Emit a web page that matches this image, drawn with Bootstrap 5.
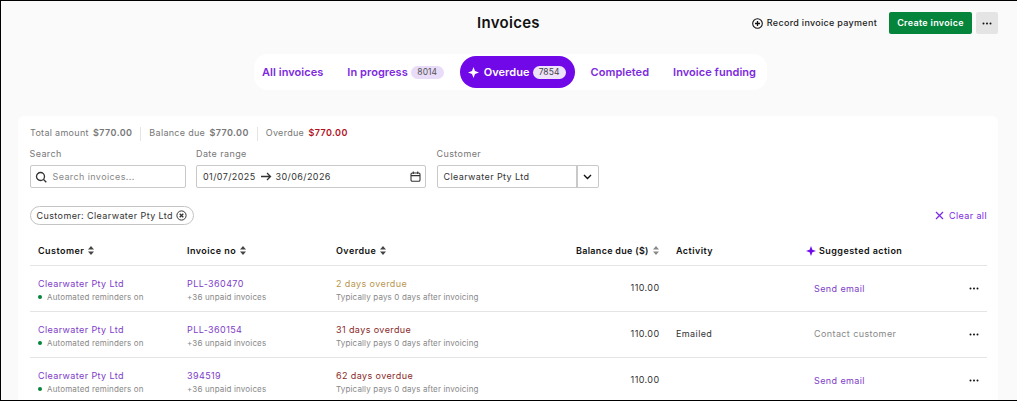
<!DOCTYPE html>
<html lang="en"><head><meta charset="utf-8"><title>Invoices</title>
<link href="https://cdn.jsdelivr.net/npm/bootstrap@5.3.0/dist/css/bootstrap.min.css" rel="stylesheet">
<style>
html,body{height:100%;overflow:hidden}
body{font-family:Inter,"Liberation Sans",sans-serif;background:#fafafa;color:#333;font-size:9px;letter-spacing:.4px}
.frame{height:401px;border-style:solid;border-color:#000;border-width:1.5px 0 1.5px 1.5px;overflow:hidden}
.top-bar{height:44px;padding:0 19px 0 0;position:relative}
.page-title{font-size:15px;font-weight:600;color:#111;margin:0;position:absolute;left:476px;top:13px;letter-spacing:.3px}
.rec-link{font-size:9px;font-weight:500;color:#222;text-decoration:none;letter-spacing:.3px;margin-right:8px}
.btn-create{background:#05843c;color:#fff;font-size:9px;font-weight:600;height:22px;width:83px;padding:0;border:0;border-radius:2px;letter-spacing:.3px}
.btn-more{background:#e4e4e4;width:22px;height:22px;padding:0;border:0;border-radius:2px;color:#111}
.tabs-wrap{height:36px;margin:9px 0 0 253px;width:513px;background:#fff;border-radius:14px}
.tab-item{font-size:11px;font-weight:600;color:#7d2ae0;text-decoration:none;letter-spacing:.05px;white-space:nowrap;display:flex;align-items:center;gap:4px}
.tab-active{background:#7008e8;color:#fff;border-radius:16px;height:32px;padding:0 9px 0 8px;margin-left:16px}
.tab-active svg{margin-right:1px}
.tabp1{margin-left:24px}.tabp2{margin-left:16px}.tabp3{margin-left:24px}
.cnt{font-size:8.5px;font-weight:400;border-radius:7px;height:13px;display:inline-flex;align-items:center;justify-content:center;width:33px;margin-left:-1px;background:#e9dcf8;color:#555}
.tab-active .cnt{background:#efe3fb;color:#444}
.panel{background:#fff;border-radius:6px 6px 0 0;margin:26px 19px 0 16.5px;padding:0 11px 0 12px;height:290px}
.summary{padding:11px 0 0 .5px;height:32px;line-height:12px;color:#777;letter-spacing:.3px}
.summary b{font-weight:600;color:#777;margin-left:1.5px;letter-spacing:.4px}
.summary b.due{color:#b2111c}
.sep{border-left:1px solid #e4e4e4;height:14px;margin:0 8px;display:inline-block;vertical-align:middle}
.f-label{color:#777;line-height:12px;margin-bottom:5px;display:block;font-size:9px}
.fbox{border:1px solid #c9c9c9;border-radius:2px;height:23px;display:flex;align-items:center;color:#333;background:#fff}
.fields{gap:10.5px;height:48px}
.f1{width:156px}.f2{width:230px}.f3{width:162px}
.ph-text{margin-left:2px}
.date-val{margin-left:2px}
.cust-val{padding-left:6px}
.cust-caret{width:22px;height:100%;border-left:2px solid #c9c9c9}
.chips-row{margin-top:10px;height:19px;margin-bottom:9px}
.chip{border:1px solid #c4c4c4;border-radius:10px;height:19px;padding:0 6px;display:inline-flex;align-items:center;gap:3px;color:#333}
.clear{color:#7d2ae0;text-decoration:none;display:flex;align-items:center;gap:5px}
.inv{table-layout:fixed;width:957px;margin:0;font-size:9px}
.inv th,.inv td{padding:0 8px 0 8.5px;border-bottom:1px solid #e4e4e4;background:transparent;vertical-align:middle;color:#333}
.inv th{height:31px;padding-top:3px;font-weight:600;color:#111;letter-spacing:.45px}
.inv th.num-h{padding-right:13px;letter-spacing:.3px}
.inv td{height:46px;line-height:14px}
.inv td.two-line{padding-top:4px}
.inv td.act-cell{padding-top:2px}
.c1,.c2{width:149px}.c3{width:240px}.c4{width:100px}.c5{width:130px}.c6{width:150px}
.lnk{color:#7d3cc8;text-decoration:none}
.sub{color:#888;font-size:8px;letter-spacing:.15px;line-height:12px;display:block}
.dot{display:inline-block;width:4px;height:4px;border-radius:50%;background:#05843c;margin-right:5px;vertical-align:1px}
.amber{color:#b8964f}.maroon{color:#8a2a2a}
.sort{margin-left:4px;vertical-align:-1px}
.spark{vertical-align:-2px;margin-left:-.5px;margin-right:3.5px}
.muted-act{color:#888}
.act{margin-left:8px;display:inline-block}
</style></head><body>
<div class="frame">
<div class="top-bar d-flex justify-content-end align-items-center gap-1">
 <h1 class="page-title">Invoices</h1>
 <a class="rec-link d-flex align-items-center gap-1" href="#"><svg width="11" height="11" viewBox="0 0 11 11" fill="none" stroke="#111" stroke-width="1.1"><circle cx="5.5" cy="5.5" r="4.8"/><path d="M5.5 3v5M3 5.5h5" stroke-width="1.3"/></svg>Record invoice payment</a>
 <button class="btn btn-create" type="button">Create invoice</button>
 <button class="btn btn-more d-flex align-items-center justify-content-center" type="button"><svg width="10" height="3" viewBox="0 0 10 3" fill="#111"><circle cx="1.5" cy="1.5" r="1"/><circle cx="5" cy="1.5" r="1"/><circle cx="8.5" cy="1.5" r="1"/></svg></button>
</div>
<nav class="tabs-wrap d-flex align-items-center">
 <a class="tab-item ms-2" href="#">All invoices</a>
 <a class="tab-item tabp1" href="#">In progress <span class="cnt">8014</span></a>
 <a class="tab-item tab-active" href="#"><svg width="11" height="11" viewBox="0 0 11 11" fill="#fff"><path d="M5.5 0L7 4l4 1.5L7 7l-1.5 4L4 7 0 5.5 4 4z"/></svg>Overdue <span class="cnt">7854</span></a>
 <a class="tab-item tabp2" href="#">Completed</a>
 <a class="tab-item tabp3" href="#">Invoice funding</a>
</nav>
<section class="panel">
 <div class="summary">Total amount <b>$770.00</b><span class="sep"></span>Balance due <b>$770.00</b><span class="sep"></span>Overdue <b class="due">$770.00</b></div>
 <div class="d-flex fields">
  <div class="f1"><label class="f-label">Search</label><div class="fbox"><svg class="mx-1" width="12" height="12" viewBox="0 0 12 12" fill="none" stroke="#333" stroke-width="1.3"><circle cx="5.5" cy="5.5" r="4"/><path d="M8.5 8.5l2.8 2.8"/></svg><span class="ph-text muted-act">Search invoices...</span></div></div>
  <div class="f2"><label class="f-label">Date range</label><div class="fbox px-1 justify-content-between"><span class="d-flex align-items-center date-val">01/07/2025<svg class="mx-1" width="12" height="9" viewBox="0 0 12 9" fill="none" stroke="#333" stroke-width="1.3"><path d="M1 4.5h9.5M7 1l3.5 3.5L7 8"/></svg>30/06/2026</span><svg width="11" height="11" viewBox="0 0 11 11" fill="none" stroke="#333" stroke-width="1.1"><rect x="1" y="2" width="9" height="8.3" rx="1.3"/><path d="M1 4.6h9M3.3.5v2.4M7.7.5v2.4"/></svg></div></div>
  <div class="f3"><label class="f-label">Customer</label><div class="fbox"><span class="flex-grow-1 cust-val">Clearwater Pty Ltd</span><span class="cust-caret d-flex align-items-center justify-content-center"><svg width="9" height="6" viewBox="0 0 9 6" fill="none" stroke="#111" stroke-width="1.4"><path d="M1 1l3.5 3.5L8 1"/></svg></span></div></div>
 </div>
 <div class="d-flex justify-content-between align-items-center chips-row">
  <span class="chip">Customer: Clearwater Pty Ltd <svg width="11" height="11" viewBox="0 0 11 11" fill="none" stroke="#333" stroke-width="1"><circle cx="5.5" cy="5.5" r="4.6"/><path d="M3.7 3.7l3.6 3.6M7.3 3.7l-3.6 3.6" stroke-width="1.3"/></svg></span>
  <a class="clear" href="#"><svg width="9" height="9" viewBox="0 0 9 9" stroke="#7d2ae0" stroke-width="1.3"><path d="M1 1l7 7M8 1L1 8"/></svg>Clear all</a>
 </div>
 <table class="table inv">
  <colgroup><col class="c1"><col class="c2"><col class="c3"><col class="c4"><col class="c5"><col class="c6"><col></colgroup>
  <thead><tr>
   <th>Customer<svg class="sort" width="6" height="9" viewBox="0 0 6 9" fill="#444"><path d="M3 0l3 3.6H0zM3 9L0 5.4h6z"/></svg></th>
   <th>Invoice no<svg class="sort" width="6" height="9" viewBox="0 0 6 9" fill="#444"><path d="M3 0l3 3.6H0zM3 9L0 5.4h6z"/></svg></th>
   <th>Overdue<svg class="sort" width="6" height="9" viewBox="0 0 6 9" fill="#444"><path d="M3 0l3 3.6H0zM3 9L0 5.4h6z"/></svg></th>
   <th class="text-end text-nowrap num-h">Balance due ($)<svg class="sort" width="6" height="9" viewBox="0 0 6 9" fill="#888"><path d="M3 0l3 3.6H0zM3 9L0 5.4h6z"/></svg></th>
   <th>Activity</th>
   <th class="text-nowrap"><svg class="spark" width="10" height="10" viewBox="0 0 11 11" fill="#7008e8"><path d="M5.5 0L7 4l4 1.5L7 7l-1.5 4L4 7 0 5.5 4 4z"/></svg>Suggested action</th>
   <th></th>
  </tr></thead>
  <tbody>
  <tr><td class="two-line"><a class="lnk" href="#">Clearwater Pty Ltd</a><span class="sub"><span class="dot"></span>Automated reminders on</span></td><td class="two-line"><a class="lnk" href="#">PLL-360470</a><span class="sub">+36 unpaid invoices</span></td><td class="two-line"><span class="amber">2 days overdue</span><span class="sub">Typically pays 0 days after invoicing</span></td><td class="text-end">110.00</td><td></td><td class="act-cell"><a class="lnk act" href="#">Send email</a></td><td class="text-end"><svg width="10" height="3" viewBox="0 0 10 3" fill="#111"><circle cx="1.5" cy="1.5" r="1"/><circle cx="5" cy="1.5" r="1"/><circle cx="8.5" cy="1.5" r="1"/></svg></td></tr>
  <tr><td class="two-line"><a class="lnk" href="#">Clearwater Pty Ltd</a><span class="sub"><span class="dot"></span>Automated reminders on</span></td><td class="two-line"><a class="lnk" href="#">PLL-360154</a><span class="sub">+36 unpaid invoices</span></td><td class="two-line"><span class="maroon">31 days overdue</span><span class="sub">Typically pays 0 days after invoicing</span></td><td class="text-end">110.00</td><td>Emailed</td><td><span class="muted-act act">Contact customer</span></td><td class="text-end"><svg width="10" height="3" viewBox="0 0 10 3" fill="#111"><circle cx="1.5" cy="1.5" r="1"/><circle cx="5" cy="1.5" r="1"/><circle cx="8.5" cy="1.5" r="1"/></svg></td></tr>
  <tr><td class="two-line"><a class="lnk" href="#">Clearwater Pty Ltd</a><span class="sub"><span class="dot"></span>Automated reminders on</span></td><td class="two-line"><a class="lnk" href="#">394519</a><span class="sub">+36 unpaid invoices</span></td><td class="two-line"><span class="maroon">62 days overdue</span><span class="sub">Typically pays 0 days after invoicing</span></td><td class="text-end">110.00</td><td></td><td class="act-cell"><a class="lnk act" href="#">Send email</a></td><td class="text-end"><svg width="10" height="3" viewBox="0 0 10 3" fill="#111"><circle cx="1.5" cy="1.5" r="1"/><circle cx="5" cy="1.5" r="1"/><circle cx="8.5" cy="1.5" r="1"/></svg></td></tr>
  </tbody>
 </table>
</section>
</div>
<script src="https://cdn.jsdelivr.net/npm/bootstrap@5.3.0/dist/js/bootstrap.bundle.min.js"></script>
</body></html>
